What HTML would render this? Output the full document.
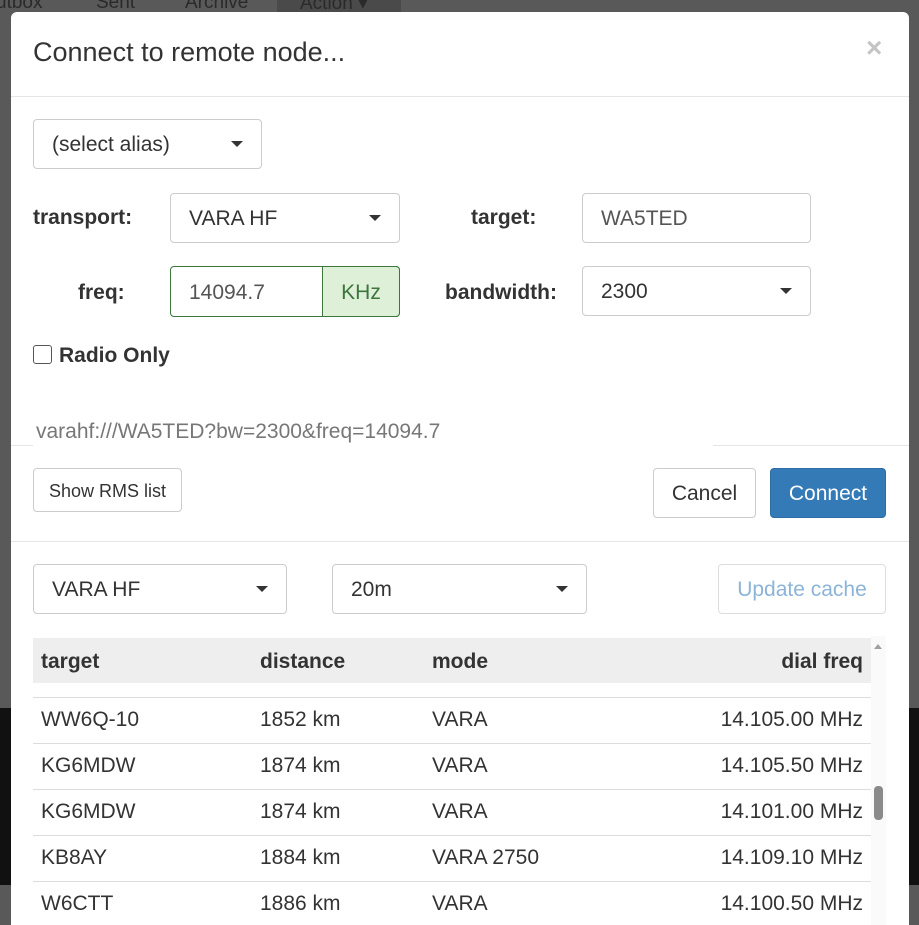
<!DOCTYPE html>
<html style="overflow:hidden;height:925px"><head><style>
*{box-sizing:border-box}
body{margin:0;width:919px;height:925px;overflow:hidden;background:#595959;font-family:"Liberation Sans",sans-serif;color:#333;position:relative}
.a{position:absolute}
.nav{top:-8px;font-size:19px;color:#2a2a2a}
.modal{left:11px;top:12px;width:898px;height:913px;background:#fff;border-radius:6px 6px 0 0}
.sel,.inp,.btn{position:absolute;border:1px solid #ccc;border-radius:4px;background:#fff;font-size:21px;padding-left:18px;display:flex;align-items:center;padding-top:2px}
.car{position:absolute;right:18px;top:50%;margin-top:-3px;width:0;height:0;border-left:6px solid transparent;border-right:6px solid transparent;border-top:6px solid #333}
.lbl{position:absolute;font-weight:bold;font-size:21px;color:#333}
.hr{position:absolute;height:1px;background:#e5e5e5}
td,th{font-size:21px;height:46px;padding:0 8px;text-align:left;border-top:1px solid #ddd}
table{border-collapse:collapse}
</style></head><body>
<div class="a nav" style="left:-4px">utbox</div>
<div class="a nav" style="left:96px">Sent</div>
<div class="a nav" style="left:185px">Archive</div>
<div class="a" style="left:277px;top:0;width:124px;height:12px;background:#4a4a4a"></div>
<div class="a nav" style="left:300px">Action ▾</div>
<div class="a" style="left:0;top:708px;width:11px;height:177px;background:#111"></div>
<div class="a" style="left:909px;top:708px;width:10px;height:177px;background:#111"></div>
<div class="a modal"></div>
<div class="a" style="left:33px;top:37px;font-size:27px;color:#333">Connect to remote node...</div>
<div class="a" style="left:866px;top:32px;font-size:28px;font-weight:bold;color:#c4c4c4">×</div>
<div class="hr" style="left:11px;top:96px;width:898px"></div>

<div class="sel" style="left:33px;top:119px;width:229px;height:50px">(select alias)<span class="car"></span></div>
<div class="lbl" style="left:33px;top:206px">transport:</div>
<div class="sel" style="left:170px;top:193px;width:230px;height:50px">VARA HF<span class="car"></span></div>
<div class="lbl" style="left:471px;top:206px">target:</div>
<div class="inp" style="left:582px;top:193px;width:229px;height:50px;color:#555">WA5TED</div>
<div class="lbl" style="left:78px;top:281px">freq:</div>
<div class="inp" style="left:170px;top:266px;width:230px;height:51px;border-color:#3c763d;color:#555">14094.7</div>
<div class="a" style="left:322px;top:266px;width:78px;height:51px;background:#dff0d8;border:1px solid #3c763d;border-radius:0 4px 4px 0;color:#3c763d;font-size:21px;display:flex;align-items:center;justify-content:center;padding-top:2px">KHz</div>
<div class="lbl" style="left:445px;top:281px">bandwidth:</div>
<div class="sel" style="left:582px;top:266px;width:229px;height:50px">2300<span class="car"></span></div>
<div class="a" style="left:33px;top:345px;width:19px;height:19px;border:1.5px solid #555;border-radius:3px"></div>
<div class="lbl" style="left:59px;top:344px">Radio Only</div>
<div class="hr" style="left:11px;top:445px;width:898px"></div>
<div class="a" style="left:33px;top:405px;width:680px;height:41px;background:#fff"></div>
<div class="a" style="left:36px;top:420px;font-size:21px;color:#777">varahf:///WA5TED?bw=2300&amp;freq=14094.7</div>

<div class="btn" style="left:33px;top:468px;width:149px;height:44px;font-size:18px;padding-left:15px">Show RMS list</div>
<div class="btn" style="left:653px;top:468px;width:103px;height:50px;justify-content:center;padding:2px 0 0">Cancel</div>
<div class="btn" style="left:770px;top:468px;width:116px;height:50px;justify-content:center;padding:2px 0 0;background:#337ab7;border-color:#2e6da4;color:#fff">Connect</div>
<div class="hr" style="left:11px;top:541px;width:898px"></div>

<div class="sel" style="left:33px;top:564px;width:254px;height:50px">VARA HF<span class="car"></span></div>
<div class="sel" style="left:332px;top:564px;width:255px;height:50px">20m<span class="car"></span></div>
<div class="btn" style="left:718px;top:564px;width:168px;height:50px;justify-content:center;padding:2px 0 0;color:#8cb4d8;border-color:#ddd">Update cache</div>

<div class="a" style="left:33px;top:638px;width:838px;height:45px;background:#eee"></div>
<table class="a" style="left:33px;top:639px;width:838px">
<tr style="height:45px"><th style="border:none;width:219px">target</th><th style="border:none;width:172px">distance</th><th style="border:none;width:200px">mode</th><th style="border:none;text-align:right">dial freq</th></tr>
<tr style="height:12px"><td style="height:12px;border:none" colspan="4"></td></tr>
<tr><td>WW6Q-10</td><td>1852 km</td><td>VARA</td><td style="text-align:right">14.105.00 MHz</td></tr>
<tr><td>KG6MDW</td><td>1874 km</td><td>VARA</td><td style="text-align:right">14.105.50 MHz</td></tr>
<tr><td>KG6MDW</td><td>1874 km</td><td>VARA</td><td style="text-align:right">14.101.00 MHz</td></tr>
<tr><td>KB8AY</td><td>1884 km</td><td>VARA 2750</td><td style="text-align:right">14.109.10 MHz</td></tr>
<tr><td>W6CTT</td><td>1886 km</td><td>VARA</td><td style="text-align:right">14.100.50 MHz</td></tr>
</table>
<div class="a" style="left:871px;top:636px;width:15px;height:290px;background:#fafafa"></div>
<div class="a" style="left:874px;top:644px;width:0;height:0;border-left:4px solid transparent;border-right:4px solid transparent;border-bottom:5px solid #a0a0a0"></div>
<div class="a" style="left:874px;top:786px;width:9px;height:34px;background:#8a8a8a;border-radius:4px"></div>
</body></html>
